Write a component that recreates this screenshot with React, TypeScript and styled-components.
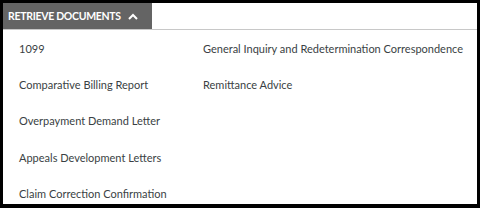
import React from 'react';
import styled, { createGlobalStyle } from 'styled-components';

const GlobalStyle = createGlobalStyle`
  html, body {
    margin: 0;
    padding: 0;
    background: #000;
  }
  body {
    font-family: Lato, "Open Sans", sans-serif;
  }
`;

const Frame = styled.div`
  width: 480px;
  height: 208px;
  box-sizing: border-box;
  padding: 3px 3px 4px 3px;
  background: #000;
`;

const Panel = styled.div`
  height: 100%;
  background: #fff;
  display: flex;
  flex-direction: column;
`;

const TabBar = styled.div`
  display: flex;
  border-bottom: 1px solid #c8c8c8;
`;

const Tab = styled.button`
  height: 26px;
  width: 149px;
  display: flex;
  align-items: center;
  gap: 7px;
  padding: 0 0 0 5px;
  border: none;
  background: #646464;
  color: #fff;
  font-family: Lato, sans-serif;
  font-weight: 700;
  font-size: 10.5px;
  letter-spacing: -0.3px;
  text-transform: uppercase;
  cursor: pointer;
`;

const Grid = styled.div`
  display: grid;
  grid-template-columns: 184px 1fr;
  grid-auto-rows: 36.3px;
  padding: 0 0 0 16px;
`;

const Item = styled.a<{ $col: number }>`
  grid-column: ${(p) => p.$col};
  display: flex;
  align-items: center;
  font-size: 11px;
  color: #3a3f44;
  text-decoration: none;
`;

const left = [
  '1099',
  'Comparative Billing Report',
  'Overpayment Demand Letter',
  'Appeals Development Letters',
  'Claim Correction Confirmation',
];

const right = ['General Inquiry and Redetermination Correspondence', 'Remittance Advice'];

function App() {
  return (
    <>
      <GlobalStyle />
      <Frame>
        <Panel>
          <TabBar>
            <Tab>
              Retrieve Documents
              <svg width="10" height="7" viewBox="0 0 10 7">
                <path d="M1 6 L5 2 L9 6" fill="none" stroke="#fff" strokeWidth="2" />
              </svg>
            </Tab>
          </TabBar>
          <Grid>
            {left.map((t, i) => (
              <Item key={t} $col={1} style={{ gridRow: i + 1 }}>
                {t}
              </Item>
            ))}
            {right.map((t, i) => (
              <Item key={t} $col={2} style={{ gridRow: i + 1 }}>
                {t}
              </Item>
            ))}
          </Grid>
        </Panel>
      </Frame>
    </>
  );
}

export default App;
